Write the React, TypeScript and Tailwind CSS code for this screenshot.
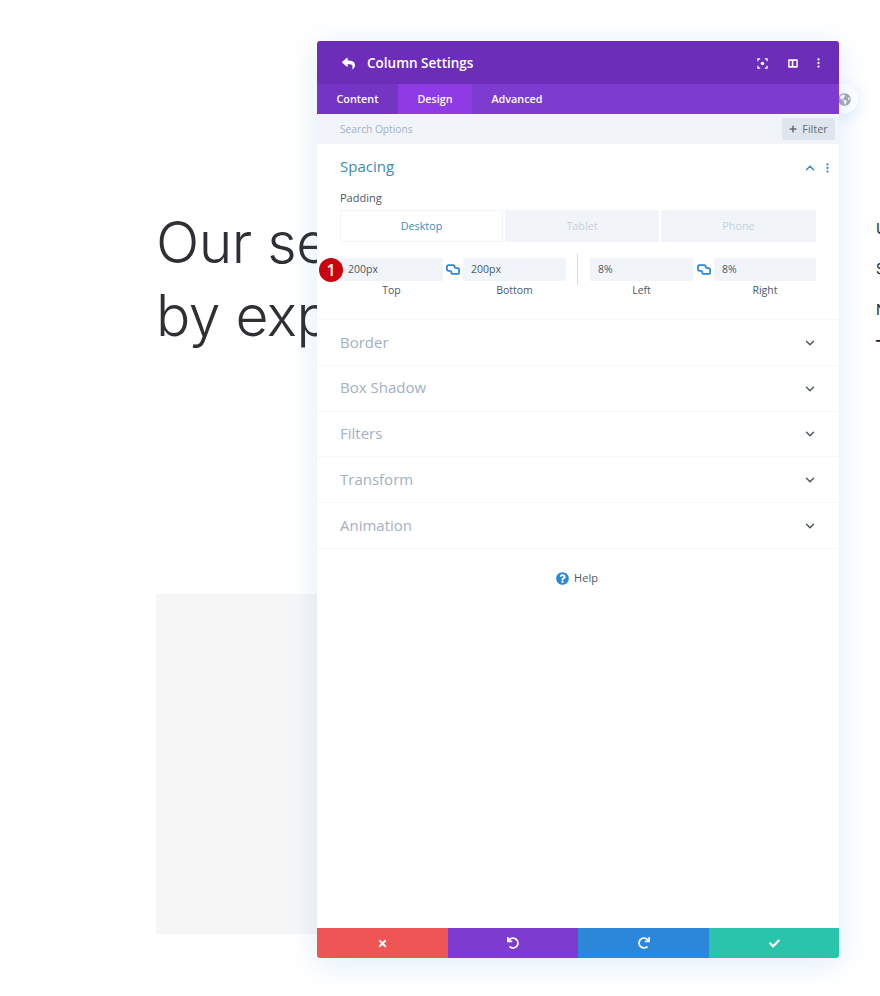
import { ChevronDown, ChevronUp } from "lucide-react";
import { FaCheck, FaGlobeAmericas, FaPlus, FaQuestionCircle, FaRedo, FaReply, FaTimes, FaUndo } from "react-icons/fa";

function Dots({ className }: { className: string }) {
  return (
    <svg viewBox="0 0 4 14" className={className} fill="currentColor">
      <circle cx="2" cy="2" r="1.6" />
      <circle cx="2" cy="7" r="1.6" />
      <circle cx="2" cy="12" r="1.6" />
    </svg>
  );
}

function LinkIcon() {
  return (
    <svg viewBox="0 0 16 12" className="w-[14px] h-[11px] text-[#2b87da]" fill="none" stroke="currentColor" strokeWidth="2" strokeLinejoin="round">
      <path d="M5.500 7.500H3A2 2 0 0 1 1 5.500V3a2 2 0 0 1 2-2h5a2 2 0 0 1 2 2v1.500" />
      <path d="M10.500 4.500H13a2 2 0 0 1 2 2V9a2 2 0 0 1-2 2H8a2 2 0 0 1-2-2V7.500" />
    </svg>
  );
}

function PaddingField({ value, label, narrow }: { value: string; label: string; narrow?: boolean }) {
  return (
    <div className={narrow ? "w-[102px] flex flex-col" : "w-[103px] flex flex-col"}>
      <div className="h-[23px] bg-[#f1f5f9] pl-[8px] flex items-center text-[10.5px] text-[#4c5866]">{value}</div>
      <div className="mt-[1px] text-center text-[10.5px] leading-[16px] text-[#4c5866]">{label}</div>
    </div>
  );
}

function Section({ title }: { title: string }) {
  return (
    <div className="h-[45.8px] border-b border-[#f5f7fa] pl-[23px] pr-[22px] flex items-center justify-between">
      <span className="text-[15px] text-[#a3b0c2] -mt-[1px]">{title}</span>
      <ChevronDown className="w-[14px] h-[14px] mt-[1px] text-[#4c5866]" strokeWidth={2.5} />
    </div>
  );
}

export default function App() {
  return (
    <div className="relative w-[880px] h-[996px] overflow-hidden bg-white font-['Open_Sans',sans-serif]">
      {/* Page behind the modal */}
      <div className="pl-[156px] pt-[206px]">
        <h1 className="text-[57px] leading-[73px] text-[#2f3034] font-['Inter',sans-serif] font-[350] tracking-[-0.5px] whitespace-nowrap">
          Our services are led
          <br />
          by experts
        </h1>
        <div className="mt-[242px] w-[400px] h-[340px] bg-[#f6f6f7]" />
      </div>
      <div className="absolute left-[876px] top-[218px] flex flex-col text-[14px] text-[#222] font-['Inter',sans-serif]">
        <span className="h-[40px]">UX</span>
        <span className="h-[41px]">SEO</span>
        <span className="h-[30px]">NFT</span>
        <span className="font-bold">—</span>
      </div>

      {/* Globe handle */}
      <div className="absolute left-[828px] top-[84px] w-[30px] h-[30px] rounded-full bg-white shadow-[0_4px_16px_rgba(43,135,218,0.16)] flex items-center justify-end pr-[7px]">
        <FaGlobeAmericas className="w-[13px] h-[13px] text-[#a5a8ab]" />
      </div>

      {/* Settings modal */}
      <div className="absolute left-[317px] top-[41px] w-[522px] h-[917px] bg-white rounded-[3px] shadow-[0_5px_30px_rgba(43,135,218,0.16)] flex flex-col overflow-hidden">
        <div className="h-[43px] shrink-0 bg-[#6c2eb9] pl-[25px] pr-[19px] pt-[1px] flex items-center text-white">
          <FaReply className="w-[13px] h-[13px]" />
          <span className="ml-[12px] text-[13.5px] font-semibold">Column Settings</span>
          <div className="ml-auto flex items-center">
            <svg viewBox="0 0 12 12" className="w-[11px] h-[11px]" fill="none" stroke="currentColor" strokeWidth="1.3">
              <path d="M1 3.500V1h2.500M8.500 1H11v2.500M11 8.500V11H8.500M3.500 11H1V8.500" />
              <circle cx="6" cy="6" r="2" fill="currentColor" stroke="none" />
            </svg>
            <svg viewBox="0 0 12 12" className="ml-[20px] w-[10px] h-[11px]" fill="currentColor">
              <path fillRule="evenodd" d="M1 1h10a.8.8 0 0 1 .8.8v8.400a.8.8 0 0 1-.8.8H1a.8.8 0 0 1-.8-.8V1.800A.8.8 0 0 1 1 1Zm1 2v6h2.500V3H2Zm4.500 0v6h3.500V3H6.500Z" />
            </svg>
            <Dots className="ml-[19px] w-[3px] h-[10px]" />
          </div>
        </div>

        <div className="h-[30px] shrink-0 bg-[#7e3bd0] flex items-stretch text-[10.8px] font-semibold text-white">
          <div className="w-[81px] bg-[#7435c5] flex items-center justify-center">Content</div>
          <div className="w-[74px] bg-[#8e3be6] flex items-center justify-center">Design</div>
          <div className="w-[90px] flex items-center justify-center">Advanced</div>
        </div>

        <div className="h-[30px] shrink-0 bg-[#f1f5f9] pl-[23px] pr-[4px] flex items-center justify-between">
          <span className="text-[10.2px] font-medium text-[#a3b0c2] pt-[1px]">Search Options</span>
          <div className="w-[53px] h-[22px] bg-[#dfe5ed] rounded-[2px] flex items-center justify-center gap-[5px] text-[10.8px] font-medium text-[#5f6b78]">
            <FaPlus className="w-[8px] h-[8px]" />
            Filter
          </div>
        </div>

        <div className="h-[176px] shrink-0 border-b border-[#f5f7fa] pl-[23px] pr-[10px] flex flex-col">
          <div className="h-[47px] flex items-center justify-between">
            <span className="text-[15px] text-[#3e8ab8] -mt-[3px]">Spacing</span>
            <div className="flex items-center gap-[9px]">
              <ChevronUp className="w-[14px] h-[14px] text-[#3e8ab8]" strokeWidth={2.5} />
              <Dots className="w-[3px] h-[10px] text-[#3e8ab8]" />
            </div>
          </div>
          <div className="text-[11px] leading-[14px] font-medium text-[#4c5866]">Padding</div>
          <div className="mt-[5px] flex gap-[2px] text-[10.8px] font-medium">
            <div className="w-[163px] h-[32px] bg-white border border-[#f1f5f9] rounded-[2px] flex items-center justify-center text-[#3e8ab8]">Desktop</div>
            <div className="w-[154px] h-[32px] bg-[#f1f5f9] flex items-center justify-center text-[#c6d0db]">Tablet</div>
            <div className="w-[155px] h-[32px] bg-[#f1f5f9] flex items-center justify-center text-[#c6d0db]">Phone</div>
          </div>
          <div className="mt-[16px] flex items-start relative">
            <PaddingField value="200px" label="Top" />
            <div className="w-[20px] h-[23px] flex items-center justify-center"><LinkIcon /></div>
            <PaddingField value="200px" label="Bottom" />
            <div className="ml-[11px] mr-[12px] -mt-[4px] w-[1px] h-[31px] bg-[#d5dbe3]" />
            <PaddingField value="8%" label="Left" />
            <div className="w-[21px] h-[23px] flex items-center justify-center"><LinkIcon /></div>
            <PaddingField value="8%" label="Right" narrow />
            <div className="absolute -left-[21px] top-0 w-[24px] h-[24px] rounded-full bg-[#c8050f] flex items-center justify-center text-white text-[16px] font-semibold leading-none">1</div>
          </div>
        </div>

        <Section title="Border" />
        <Section title="Box Shadow" />
        <Section title="Filters" />
        <Section title="Transform" />
        <Section title="Animation" />

        <div className="mt-[21px] flex items-center justify-center gap-[5px] pr-[2px] text-[11px] font-medium text-[#4c5866]">
          <FaQuestionCircle className="w-[13px] h-[13px] text-[#2b87da]" />
          Help
        </div>

        <div className="mt-auto h-[30px] shrink-0 flex text-white">
          <div className="w-[131px] bg-[#ef5555] flex items-center justify-center"><FaTimes className="w-[11px] h-[11px]" /></div>
          <div className="w-[130px] bg-[#7e3bd0] flex items-center justify-center"><FaUndo className="w-[12px] h-[12px]" /></div>
          <div className="w-[131px] bg-[#2b87da] flex items-center justify-center"><FaRedo className="w-[12px] h-[12px]" /></div>
          <div className="w-[130px] bg-[#29c4a9] flex items-center justify-center"><FaCheck className="w-[11px] h-[11px]" /></div>
        </div>
      </div>
    </div>
  );
}
